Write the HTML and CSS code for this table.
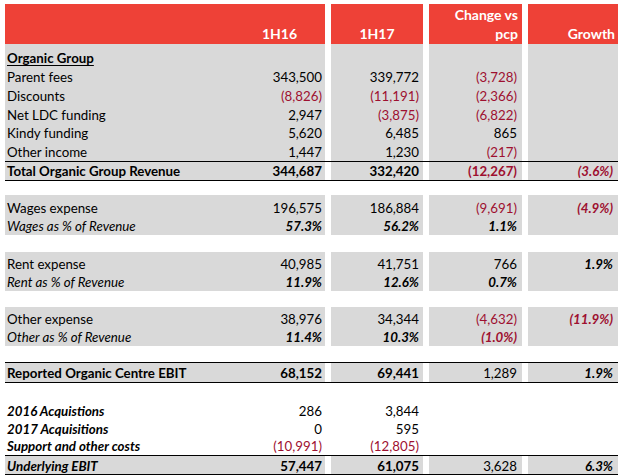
FILE: index.html
```html
<!DOCTYPE html>
<html>
<head>
<meta charset="utf-8">
<link rel="stylesheet" href="styles.css">
</head>
<body>
<div class="sheet">
  <div class="hdr">
    <div class="c1"><span class="lab"></span><span class="v1">1H16</span></div>
    <div class="hc">1H17</div>
    <div class="hr4">Change vs<br>pcp</div>
    <div class="hr3">Growth</div>
  </div>

  <div class="r g first">
    <div class="c1"><span class="lab b u">Organic Group</span><span class="v1"></span></div>
    <div></div><div></div><div></div>
  </div>
  <div class="r g">
    <div class="c1"><span class="lab">Parent fees</span><span class="v1">343,500</span></div>
    <div>339,772</div><div class="neg">(3,728)</div><div></div>
  </div>
  <div class="r g">
    <div class="c1"><span class="lab">Discounts</span><span class="v1 neg">(8,826)</span></div>
    <div class="neg">(11,191)</div><div class="neg">(2,366)</div><div></div>
  </div>
  <div class="r g">
    <div class="c1"><span class="lab">Net LDC funding</span><span class="v1">2,947</span></div>
    <div class="neg">(3,875)</div><div class="neg">(6,822)</div><div></div>
  </div>
  <div class="r g">
    <div class="c1"><span class="lab">Kindy funding</span><span class="v1">5,620</span></div>
    <div>6,485</div><div>865</div><div></div>
  </div>
  <div class="r g">
    <div class="c1"><span class="lab">Other income</span><span class="v1">1,447</span></div>
    <div>1,230</div><div class="neg">(217)</div><div></div>
  </div>
  <div class="r g ln tot b">
    <div class="c1"><span class="lab">Total Organic Group Revenue</span><span class="v1">344,687</span></div>
    <div>332,420</div><div class="neg">(12,267)</div><div class="neg i">(3.6%)</div>
  </div>

  <div class="blk wages">
    <div class="r g pt25">
      <div class="c1"><span class="lab">Wages expense</span><span class="v1">196,575</span></div>
      <div>186,884</div><div class="neg">(9,691)</div><div class="neg b i">(4.9%)</div>
    </div>
    <div class="r g">
      <div class="c1"><span class="lab i">Wages as % of Revenue</span><span class="v1 b i">57.3%</span></div>
      <div class="b i">56.2%</div><div class="b i">1.1%</div><div></div>
    </div>
  </div>

  <div class="blk rent">
    <div class="r g pt15">
      <div class="c1"><span class="lab">Rent expense</span><span class="v1">40,985</span></div>
      <div>41,751</div><div>766</div><div class="b i">1.9%</div>
    </div>
    <div class="r g">
      <div class="c1"><span class="lab i">Rent as % of Revenue</span><span class="v1 b i">11.9%</span></div>
      <div class="b i">12.6%</div><div class="b i">0.7%</div><div></div>
    </div>
  </div>

  <div class="blk other">
    <div class="r g pt15">
      <div class="c1"><span class="lab">Other expense</span><span class="v1">38,976</span></div>
      <div>34,344</div><div class="neg">(4,632)</div><div class="neg b i">(11.9%)</div>
    </div>
    <div class="r g">
      <div class="c1"><span class="lab i">Other as % of Revenue</span><span class="v1 b i">11.4%</span></div>
      <div class="b i">10.3%</div><div class="neg b i">(1.0%)</div><div></div>
    </div>
  </div>

  <div class="r g ln rep">
    <div class="c1"><span class="lab b">Reported Organic Centre EBIT</span><span class="v1 b">68,152</span></div>
    <div class="b">69,441</div><div>1,289</div><div class="b i">1.9%</div>
  </div>

  <div class="acq">
    <div class="r w">
      <div class="c1"><span class="lab b i">2016 Acquistions</span><span class="v1">286</span></div>
      <div>3,844</div><div></div><div></div>
    </div>
    <div class="r w">
      <div class="c1"><span class="lab b i">2017 Acquisitions</span><span class="v1">0</span></div>
      <div>595</div><div></div><div></div>
    </div>
    <div class="r w sup">
      <div class="c1"><span class="lab b i">Support and other costs</span><span class="v1 neg">(10,991)</span></div>
      <div class="neg">(12,805)</div><div></div><div></div>
    </div>
  </div>

  <div class="r g ln und">
    <div class="c1"><span class="lab b i">Underlying EBIT</span><span class="v1 b">57,447</span></div>
    <div class="b">61,075</div><div>3,628</div><div class="b i">6.3%</div>
  </div>
</div>
</body>
</html>
```

FILE: styles.css
```css
html, body {
  margin: 0;
  padding: 0;
  background: #ffffff;
}

.sheet {
  padding: 4px 0 0 5px;
  width: 613px;
  font-family: Lato, "Open Sans", sans-serif;
  font-size: 13.3px;
  color: #000000;
}

.hdr,
.r {
  display: grid;
  grid-template-columns: 320px 92px 93px 90px;
  column-gap: 6px;
}

.hdr {
  height: 40px;
  line-height: 19px;
  font-size: 14px;
  font-weight: 700;
  color: #ffffff;
}

.hdr > div {
  background: #ee4137;
  display: flex;
  flex-direction: column;
  justify-content: flex-end;
  padding-bottom: 1px;
  box-sizing: border-box;
}

.hdr .c1 {
  flex-direction: row;
  align-items: flex-end;
}

.hdr .v1 {
  text-align: center;
  padding-right: 0;
}

.hc {
  text-align: center;
}

.hr4 {
  text-align: right;
  padding-right: 4px;
}

.hr3 {
  text-align: right;
  padding-right: 3px;
}

.r {
  line-height: 16.75px;
}

.r > div {
  text-align: right;
  white-space: nowrap;
  padding-top: 2px;
}

.r > div:nth-child(2) { padding-right: 4px; }
.r > div:nth-child(3) { padding-right: 5px; }
.r > div:nth-child(4) { padding-right: 5px; }

.c1 {
  display: flex;
}

.lab {
  flex: 1;
  text-align: left;
  padding-left: 2px;
}

.v1 {
  width: 91px;
  text-align: right;
  padding-right: 3px;
  box-sizing: border-box;
}

.g > div {
  background: #d9d9d9;
}

.r.first > div { padding-top: 6.25px; }
.r.pt25 > div { padding-top: 4.5px; }
.r.pt15 > div { padding-top: 3.5px; }

.ln {
  border-top: 1px solid #000000;
  border-bottom: 1px solid #000000;
}

.tot { line-height: 15.75px; }

.wages { margin-top: 14.5px; }
.rent { margin-top: 17px; }
.other { margin-top: 16px; }
.rep { margin-top: 16px; }

.acq { margin-top: 18.25px; }
.acq .r { line-height: 16px; }
.acq .sup { line-height: 15.5px; }

.und { line-height: 16px; }

.b { font-weight: 700; }
.i { font-style: italic; }
.u { text-decoration: underline; text-underline-offset: 2px; }
.neg { color: #9e1030; }
```
